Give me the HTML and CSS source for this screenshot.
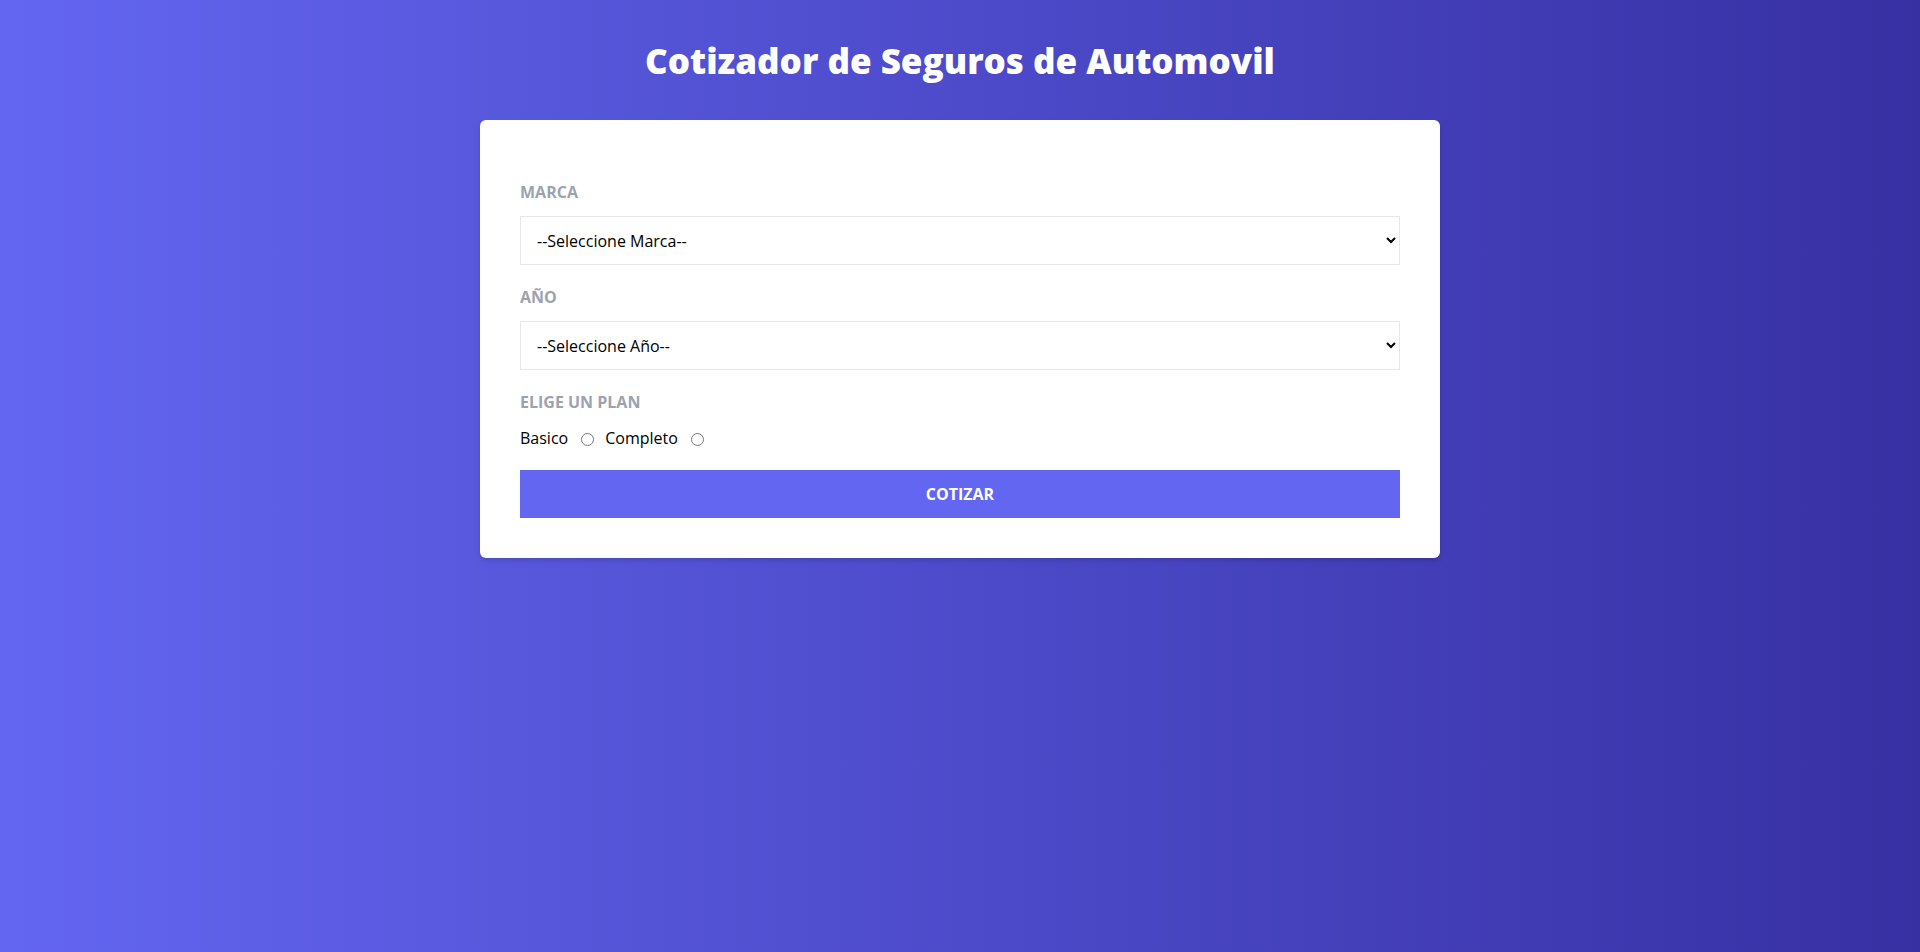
FILE: index.html
```html
<!DOCTYPE html>
<html lang="es">
<head>
<meta charset="utf-8">
<title>Cotizador de Seguros de Automovil</title>
<link rel="stylesheet" href="styles.css">
</head>
<body>
  <header class="header">
    <h1 class="title">Cotizador de Seguros de Automovil</h1>
  </header>
  <main class="card">
    <form class="form">
      <div class="field">
        <label class="label">Marca</label>
        <select class="select">
          <option>--Seleccione Marca--</option>
        </select>
      </div>
      <div class="field">
        <label class="label">Año</label>
        <select class="select">
          <option>--Seleccione Año--</option>
        </select>
      </div>
      <div class="field">
        <label class="label">Elige un plan</label>
        <div class="plans">
          <label class="plan-label">Basico</label>
          <input class="radio" type="radio" name="plan" value="1">
          <label class="plan-label">Completo</label>
          <input class="radio" type="radio" name="plan" value="2">
        </div>
      </div>
      <button type="button" class="submit">Cotizar</button>
    </form>
  </main>
</body>
</html>
```
FILE: styles.css
```css
* { box-sizing: border-box; }
html, body { margin: 0; padding: 0; }
body {
  min-height: 952px;
  background: linear-gradient(to right, #6366f1, #3730a3);
  font-family: "Open Sans", "Noto Sans", sans-serif;
  font-size: 16px;
  line-height: 24px;
  color: #000;
}
.header { padding-top: 42px; }
.title {
  margin: 0;
  text-align: center;
  color: #fff;
  font-size: 35px;
  line-height: 38px;
  font-weight: 800;
}
.card {
  width: 960px;
  margin: 40px auto 0;
  background: #fff;
  border-radius: 6px;
  padding: 40px;
  box-shadow: 0 4px 6px -1px rgba(0,0,0,0.1), 0 2px 4px -2px rgba(0,0,0,0.1);
}
.form { display: block; }
.field { margin: 20px 0; }
.label {
  display: block;
  margin-bottom: 12px;
  color: #9ca3af;
  font-weight: 700;
  text-transform: uppercase;
}
.select {
  display: block;
  width: 100%;
  height: 49px;
  padding: 0 12px;
  border: 1px solid #e5e7eb;
  border-radius: 0;
  background: #fff;
  font-family: inherit;
  font-size: 16px;
  color: #000;
}
.plans {
  display: flex;
  align-items: center;
  gap: 8px;
}
.radio {
  width: 13px;
  height: 13px;
  margin: 3px 3px 0 5px;
}
.submit {
  display: block;
  width: 100%;
  height: 48px;
  border: 0;
  background: #6366f1;
  color: #fff;
  font-family: inherit;
  font-size: 16px;
  font-weight: 700;
  text-transform: uppercase;
  cursor: pointer;
}
```
